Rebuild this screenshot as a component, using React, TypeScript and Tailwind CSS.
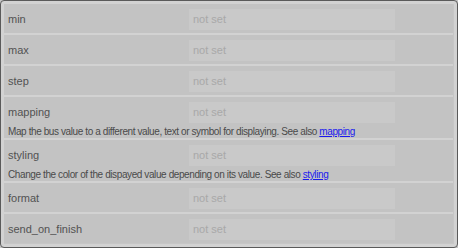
import React from "react";

// widget properties panel: list of props with "not set" inputs

type Prop = {
  name: string;
  desc?: string;
  link?: string;
};

const PROPS: Prop[] = [
  { name: "min" },
  { name: "max" },
  { name: "step" },
  {
    name: "mapping",
    desc: "Map the bus value to a different value, text or symbol for displaying. See also ",
    link: "mapping",
  },
  {
    name: "styling",
    desc: "Change the color of the dispayed value depending on its value. See also ",
    link: "styling",
  },
  { name: "format" },
  { name: "send_on_finish" },
];

function PropRow({ prop }: { prop: Prop }) {
  return (
    <div
      className={
        prop.desc
          ? "bg-[#c3c3c3] pb-0 pl-[4px] pt-[5px]"
          : "bg-[#c3c3c3] pb-[3px] pl-[4px] pt-[5px]"
      }
    >
      <div className="flex items-center">
        <div className="w-[181px] text-[11px] leading-[21px] text-[#525252]">
          {prop.name}
        </div>
        <div className="h-[21px] w-[206px] bg-[#c9c9c9] pl-[4px] text-[11px] leading-[21px] text-[#a8a8a8]">
          not set
        </div>
      </div>
      {prop.desc && (
        <p className="mt-[3px] text-[10px] leading-[12px] tracking-[-0.4px] text-[#4a4a4a]">
          {prop.desc}
          <a href="#" className="text-[#1a1aee] underline">
            {prop.link}
          </a>
        </p>
      )}
    </div>
  );
}

export default function App() {
  return (
    <div
      className="h-[248px] w-[458px] bg-[#c8c8c8]"
      style={{ fontFamily: '"Liberation Sans", Arial, sans-serif' }}
    >
      <div className="h-[248px] rounded-[4px] border border-[#5a5a5a] bg-[#d2d2d2] pb-[2px] pl-[3px] pr-[3px] pt-[3px]">
        <div className="flex flex-col gap-[2px] border-r border-b border-[#c6c6c6]">
          {PROPS.map((p) => (
            <PropRow key={p.name} prop={p} />
          ))}
        </div>
      </div>
    </div>
  );
}
